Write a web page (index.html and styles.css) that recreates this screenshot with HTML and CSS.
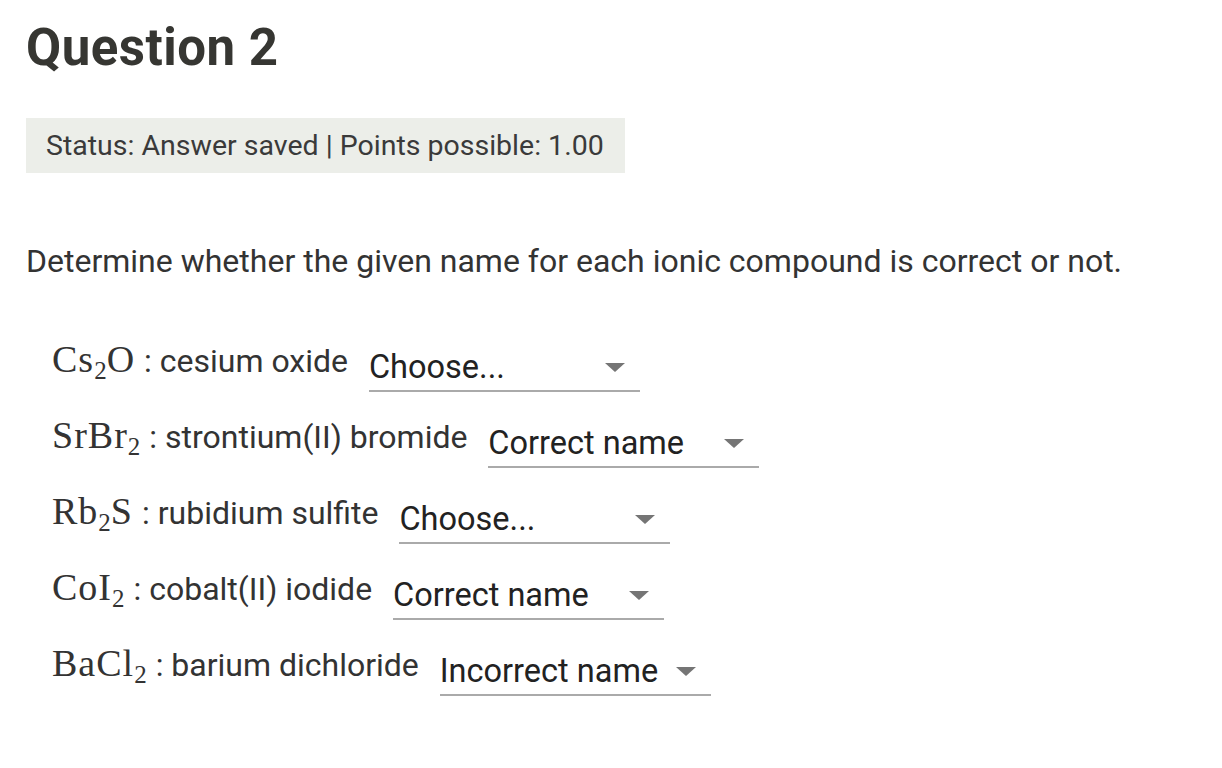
FILE: index.html
```html
<!DOCTYPE html>
<html lang="en">
<head>
    <meta charset="UTF-8">
    <title>Question 2</title>
    <link rel="stylesheet" href="styles.css">
</head>
<body>
    <div class="question">
        <h1>Question 2</h1>

        <div class="status">Status: Answer saved | Points possible: 1.00</div>

        <p class="prompt">Determine whether the given name for each ionic compound is correct or not.</p>

        <!-- Matching rows -->
        <div class="rows">
            <div class="row">
                <span class="formula">Cs<sub>2</sub>O</span><span class="label">: cesium oxide</span>
                <div class="pick"><span class="pick-text">Choose...</span><span class="caret"></span></div>
            </div>
            <div class="row">
                <span class="formula">SrBr<sub>2</sub></span><span class="label">: strontium(II) bromide</span>
                <div class="pick"><span class="pick-text">Correct name</span><span class="caret"></span></div>
            </div>
            <div class="row">
                <span class="formula">Rb<sub>2</sub>S</span><span class="label">: rubidium sulfite</span>
                <div class="pick"><span class="pick-text">Choose...</span><span class="caret"></span></div>
            </div>
            <div class="row">
                <span class="formula">CoI<sub>2</sub></span><span class="label">: cobalt(II) iodide</span>
                <div class="pick"><span class="pick-text">Correct name</span><span class="caret"></span></div>
            </div>
            <div class="row">
                <span class="formula">BaCl<sub>2</sub></span><span class="label">: barium dichloride</span>
                <div class="pick"><span class="pick-text">Incorrect name</span><span class="caret"></span></div>
            </div>
        </div>
    </div>
</body>
</html>
```

FILE: styles.css
```css
body {
    margin: 0;
    background: #fff;
    font-family: Roboto, 'Liberation Sans', sans-serif;
    color: #333;
}
.question {
    padding: 16px 26px;
}
h1 {
    margin: 0;
    font-size: 51px;
    font-weight: 700;
    color: #363632;
    letter-spacing: 0.5px;
    line-height: 64px;
}
.status {
    width: fit-content;
    margin-top: 38px;
    padding: 0 21px 0 20px;
    height: 55px;
    line-height: 55px;
    background: #eceee9;
    font-size: 28.5px;
    color: #3a3a3a;
}
.prompt {
    margin: 68px 0 0;
    font-size: 32px;
    line-height: 40px;
    color: #333;
}
.rows {
    margin-top: 42px;
    padding-left: 26px;
}
.row {
    height: 76px;
    font-size: 32px;
    line-height: 76px;
    white-space: nowrap;
}
.formula {
    font-family: 'Liberation Serif', serif;
    font-size: 38px;
    line-height: 1;
    letter-spacing: 1px;
    color: #333;
}
.formula sub {
    font-size: 25px;
    vertical-align: -7px;
    line-height: 0;
    letter-spacing: 0;
}
.label {
    font-size: 32px;
    line-height: 1;
    margin-left: 9px;
}
.pick {
    display: inline-flex;
    justify-content: space-between;
    align-items: baseline;
    vertical-align: -6px;
    width: 271px;
    margin-left: 13px;
    padding-bottom: 6px;
    border-bottom: 2px solid #aaa;
    line-height: 34px;
}
.pick-text {
    font-size: 32.5px;
    color: #222;
}
.caret {
    align-self: flex-start;
    width: 0;
    height: 0;
    margin-top: 13px;
    margin-right: 15px;
    border-left: 10px solid transparent;
    border-right: 10px solid transparent;
    border-top: 9px solid #757575;
}
```
